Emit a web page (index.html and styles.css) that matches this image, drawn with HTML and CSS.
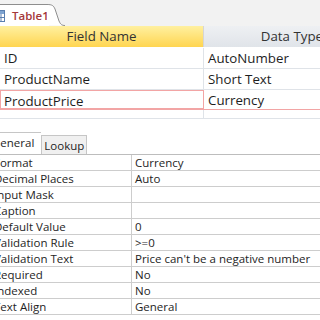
FILE: index.html
```html
<!DOCTYPE html>
<html lang="en">
<head>
    <meta charset="UTF-8">
    <title>Table1</title>
    <link rel="stylesheet" href="styles.css">
</head>
<body>
    <div class="tabStrip">
        <div class="docTab">
            <svg class="tblIcon" width="12" height="12" viewBox="0 0 12 12">
                <rect x="0.5" y="0.5" width="11" height="11" fill="#fff" stroke="#5a7fb0"/>
                <rect x="1" y="1" width="10" height="3" fill="#7ea3d0"/>
                <path d="M1 7.5H11M4.5 4V11M8 4V11" stroke="#5a7fb0"/>
            </svg>
            <span class="docTitle">Table1</span>
        </div>
        <svg class="tabEdge" width="18" height="22" viewBox="0 0 18 22">
            <path d="M0 0.5 C5 0.5 6.5 1.5 8 5 L12 17 C13.5 20.5 15 21.5 18 21.5 L0 21.5 Z" fill="#fff"/>
            <path d="M0 0.5 C5 0.5 6.5 1.5 8 5 L12 17 C13.5 20.5 15 21.5 18 21.5" fill="none" stroke="#8e8e8e"/>
        </svg>
    </div>

    <div class="design">
        <div class="row head">
            <div class="cell fname">Field Name</div>
            <div class="cell ftype">Data Type</div>
        </div>
        <div class="row">
            <div class="cell fname">ID</div>
            <div class="cell ftype">AutoNumber</div>
        </div>
        <div class="row">
            <div class="cell fname">ProductName</div>
            <div class="cell ftype">Short Text</div>
        </div>
        <div class="row current">
            <div class="cell fname">ProductPrice</div>
            <div class="cell ftype">Currency</div>
        </div>
        <div class="row stub">
            <div class="cell fname"></div>
            <div class="cell ftype"></div>
        </div>
    </div>

    <div class="props">
        <div class="propTabs">
            <div class="propTab active">General</div>
            <div class="propTab">Lookup</div>
        </div>
        <div class="propGrid">
            <div class="prop"><span class="pname">Format</span><span class="pval">Currency</span></div>
            <div class="prop"><span class="pname">Decimal Places</span><span class="pval">Auto</span></div>
            <div class="prop"><span class="pname">Input Mask</span><span class="pval"></span></div>
            <div class="prop"><span class="pname">Caption</span><span class="pval"></span></div>
            <div class="prop"><span class="pname">Default Value</span><span class="pval">0</span></div>
            <div class="prop"><span class="pname">Validation Rule</span><span class="pval">&gt;=0</span></div>
            <div class="prop"><span class="pname">Validation Text</span><span class="pval">Price can't be a negative number</span></div>
            <div class="prop"><span class="pname">Required</span><span class="pval">No</span></div>
            <div class="prop"><span class="pname">Indexed</span><span class="pval">No</span></div>
            <div class="prop"><span class="pname">Text Align</span><span class="pval">General</span></div>
        </div>
        <div class="propFoot"></div>
    </div>
</body>
</html>
```

FILE: styles.css
```css
body{
    margin: 0;
    width: 320px;
    height: 320px;
    overflow: hidden;
    background: #fff;
    font-family: "Open Sans", "Noto Sans", sans-serif;
    color: #1e1e1e;
}

/* document tab */
.tabStrip{
    display: flex;
    align-items: flex-end;
    height: 26px;
    background: #f2f2f2;
}
.docTab{
    display: flex;
    align-items: center;
    height: 22px;
    margin-left: -7px;
    background: #fff;
    border-top: 1px solid #8e8e8e;
    box-sizing: border-box;
}
.tblIcon{
    margin-right: 7px;
}
.docTitle{
    font-size: 11.5px;
    font-weight: 600;
    color: #a4373a;
}
.tabEdge{
    display: block;
    margin-left: -2px;
}

/* field list */
.row{
    display: flex;
    height: 20px;
    border-bottom: 1px solid #dfe3e8;
    font-size: 13.3px;
    line-height: 20px;
}
.cell{
    box-sizing: border-box;
    padding-left: 4px;
    white-space: nowrap;
    overflow: hidden;
}
.fname{
    width: 204px;
    border-right: 1px solid #dfe3e8;
}
.ftype{
    flex: 1;
}
.head{
    height: 21px;
    border-bottom: 1px solid #fff;
    line-height: 21px;
    color: #333;
}
.head .fname{
    text-align: center;
    padding-left: 0;
    background: linear-gradient(#fff0a0, #ffd550);
    border-right: 1px solid #d5d5d5;
}
.head .ftype{
    text-align: right;
    margin-right: -3px;
    background: linear-gradient(#eef0f3, #e0e4e9);
}
.current .fname{
    border: 1px solid #f2a5a5;
    padding-left: 3px;
}
.current{
    height: 19px;
    border-bottom-color: #f2a5a5;
}
.stub{
    height: 8px;
}

/* field properties */
.props{
    margin-top: 13px;
    margin-left: -6px;
}
.propTabs{
    display: flex;
    align-items: flex-end;
    height: 22px;
}
.propTab{
    height: 18px;
    padding: 0 2px;
    font-size: 11.5px;
    line-height: 19px;
    background: #f0f0f0;
    border: 1px solid #c6c6c6;
    border-bottom: none;
}
.propTab.active{
    height: 21px;
    line-height: 20px;
    margin-left: -3px;
    padding: 0 7px 0 0;
    background: #fff;
    border-right: none;
}
.propGrid{
    border-top: 1px solid #bdbdbd;
}
.prop{
    display: flex;
    height: 15px;
    border-bottom: 1px solid #cdcdcd;
    font-size: 11.5px;
    line-height: 15px;
    white-space: nowrap;
}
.pname{
    width: 137px;
    border-right: 1px solid #cdcdcd;
}
.pval{
    flex: 1;
    padding-left: 3px;
}
.propFoot{
    height: 5px;
    border-bottom: 2px solid #111;
}
```
